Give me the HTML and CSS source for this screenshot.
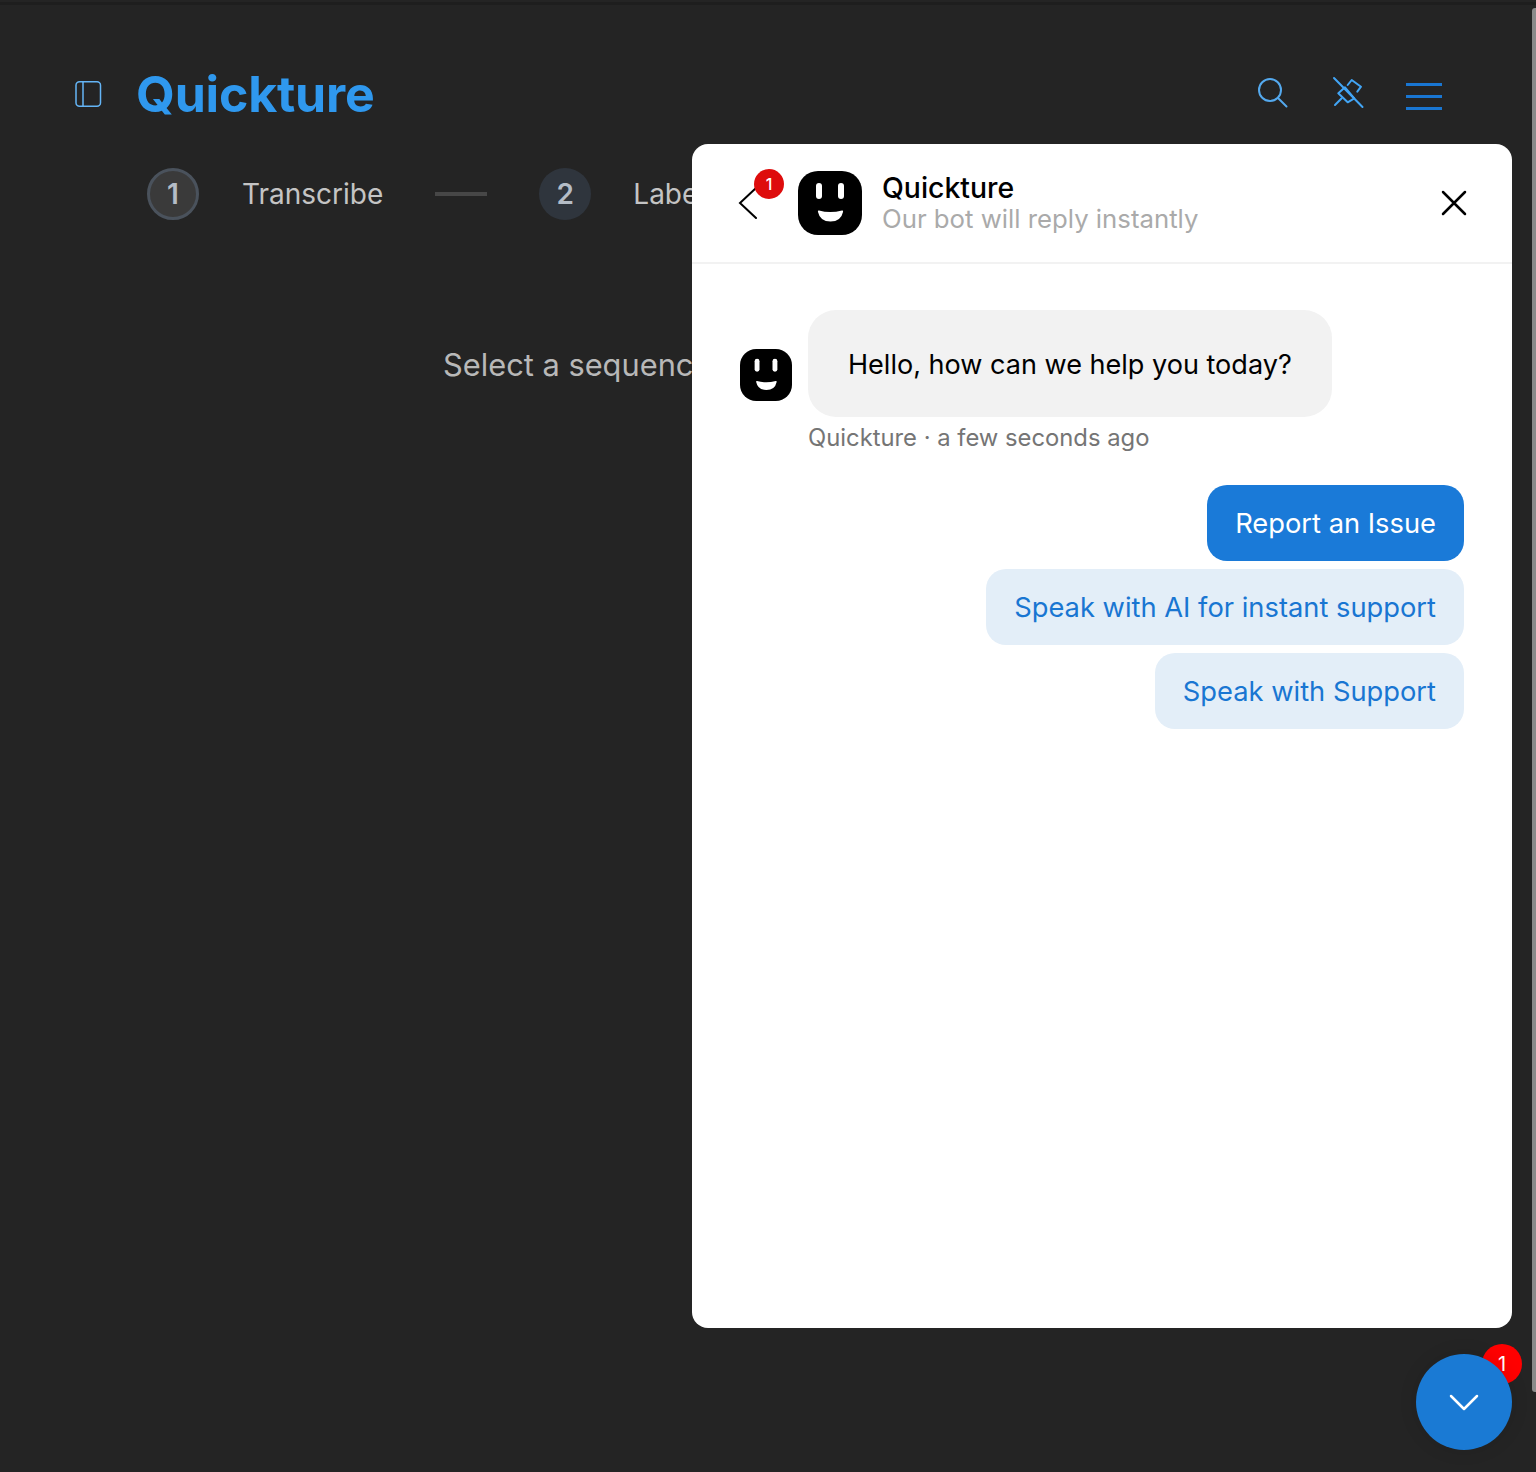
FILE: index.html
```html
<!DOCTYPE html>
<html lang="en">
<head>
  <meta charset="UTF-8" />
  <title>Quickture</title>
  <link rel="stylesheet" href="styles.css">
</head>
<body>
  <div class="topline"></div>
  <div class="app">
    <header class="topbar">
      <button class="iconBtn sidebarBtn" aria-label="Toggle sidebar">
        <svg width="28" height="28" viewBox="0 0 28 28" fill="none" stroke="#64b5f6" stroke-width="1.500"><rect x="1" y="1.800" width="24.500" height="24.400" rx="3.500"/><path d="M8 2v24"/></svg>
      </button>
      <div class="logo">Quickture</div>
      <div class="topActions">
        <svg class="searchIcon" width="30" height="30" viewBox="0 0 30 30" fill="none" stroke="#54a9ee" stroke-width="2" stroke-linecap="round"><circle cx="12" cy="12" r="11"/><path d="M20 20l8.500 8.500"/></svg>
        <svg class="pinIcon" width="32" height="33" viewBox="0 0 32 33" fill="none" stroke="#42a5f5" stroke-width="2" stroke-linecap="round" stroke-linejoin="round"><path d="M2 2l28.500 29"/><path d="M15.700 9l4-5 9.300 6.700-3.700 5"/><path d="M13 11.300l-6.700 6 9.400 9 6.600-4z"/><path d="M3 29l6.700-6.700"/></svg>
        <div class="burger"><span></span><span></span><span></span></div>
      </div>
    </header>

    <ol class="steps">
      <li class="step"><span class="stepNum active">1</span><span class="stepLabel">Transcribe</span></li>
      <li class="stepLine"></li>
      <li class="step"><span class="stepNum">2</span><span class="stepLabel">Label</span></li>
    </ol>

    <p class="hint">Select a sequence</p>
  </div>

  <section class="chat">
    <div class="chatHead">
      <button class="iconBtn backBtn" aria-label="Back">
        <svg width="20" height="32" viewBox="0 0 20 32" fill="none" stroke="#000" stroke-width="2" stroke-linecap="round"><path d="M18 1L2 16l16 15"/></svg>
        <span class="backBadge">1</span>
      </button>
      <svg class="face faceLg" viewBox="0 0 64 64"><use href="#face"/></svg>
      <div class="chatTitle">
        <div class="chatName">Quickture</div>
        <div class="chatSub">Our bot will reply instantly</div>
      </div>
      <button class="iconBtn closeBtn" aria-label="Close">
        <svg width="26" height="26" viewBox="0 0 26 26" stroke="#000" stroke-width="2.500" stroke-linecap="round"><path d="M2 2l22 22M24 2L2 24"/></svg>
      </button>
    </div>
    <div class="chatBody">
      <div class="msgRow">
        <svg class="face faceSm" viewBox="0 0 64 64"><use href="#face"/></svg>
        <div class="bubble">Hello, how can we help you today?</div>
      </div>
      <div class="msgMeta">Quickture · a few seconds ago</div>
      <div class="options">
        <button class="opt optOn">Report an Issue</button>
        <button class="opt">Speak with AI for instant support</button>
        <button class="opt">Speak with Support</button>
      </div>
    </div>
  </section>

  <div class="fab">
    <span class="fabBadge">1</span>
    <button class="fabBtn" aria-label="Close chat">
      <svg width="30" height="18" viewBox="0 0 30 18" fill="none" stroke="#fff" stroke-width="2.500" stroke-linecap="round" stroke-linejoin="round"><path d="M2 3l13 13L28 3"/></svg>
    </button>
  </div>

  <div class="scrollThumb"></div>

  <svg width="0" height="0" class="defs">
    <symbol id="face" viewBox="0 0 64 64">
      <path d="M20 0h24a20 20 0 0 1 20 20v24a20 20 0 0 1-20 20H20A20 20 0 0 1 0 44V20A20 20 0 0 1 20 0z" fill="#000"/>
      <rect x="18" y="12" width="6" height="16" rx="3" fill="#fff"/>
      <rect x="40" y="12" width="6" height="16" rx="3" fill="#fff"/>
      <path d="M21 39.500q11 3 23 0q1.500-.500 1 1.500q-2 9.500-12.500 9.500t-12.500-9.500q-.500-2 1-1.500z" fill="#fff"/>
    </symbol>
  </svg>
</body>
</html>
```

FILE: styles.css
```css
/* Reset & Base */
* { box-sizing: border-box; margin: 0; padding: 0; }
html, body { height: 100%; overflow: hidden; font-family: Inter, 'Noto Sans', sans-serif; background: #242424; color: #c4c4c4; }
button { border: none; background: none; font: inherit; cursor: pointer; }
.defs { display: block; }

.topline { height: 3px; margin-top: 2px; background: #1e1e1e; }

/* Page behind the chat */
.app { height: 100%; padding: 0 94px 0 75px; }
.topbar { display: flex; align-items: center; height: 64px; margin-top: 57px; }
.iconBtn { display: flex; align-items: center; justify-content: center; }
.sidebarBtn { width: 28px; height: 28px; }
.logo { margin-left: 33px; font-size: 50px; font-weight: 700; letter-spacing: -0.2px; color: #2f98ee; line-height: 64px; }
.topActions { margin-left: auto; display: flex; align-items: center; }
.searchIcon { margin-top: -3px; }
.pinIcon { margin-left: 44px; margin-top: -3px; }
.burger { margin-left: 42px; margin-top: 5px; width: 36px; display: flex; flex-direction: column; gap: 9px; }
.burger span { display: block; height: 3px; background: #1976d2; }

.steps { list-style: none; display: flex; align-items: center; margin-top: 42px; margin-left: 72px; }
.step { display: flex; align-items: center; gap: 44px; }
.step:last-child { gap: 43px; }
.stepNum { width: 52px; height: 52px; border-radius: 50%; background: #2f353d; color: #b4bcc6; font-size: 28px; font-weight: 600; display: flex; align-items: center; justify-content: center; }
.stepNum.active { background: #3a3a3a; border: 3px solid #4a525c; }
.stepLabel { font-size: 28px; font-weight: 400; color: #c4c4c4; margin-left: -1px; }
.stepLine { width: 52px; height: 4px; margin: 0 52px; background: #474747; }

.hint { margin-top: 126px; margin-left: 368px; font-size: 30.800px; color: #b8b8b8; white-space: nowrap; }

/* Chat panel */
.chat { position: absolute; left: 692px; top: 144px; width: 820px; height: 1184px; background: #fff; border-radius: 16px; color: #000; }
.chatHead { position: relative; display: flex; align-items: center; height: 120px; padding: 0 45px 0 46px; border-bottom: 2px solid #f2f2f2; }
.backBtn { position: relative; width: 20px; height: 32px; margin-right: 40px; }
.backBadge { position: absolute; left: 16px; top: -18px; width: 30px; height: 30px; border-radius: 50%; background: #de0c0c; color: #fff; font-size: 16px; font-weight: 500; display: flex; align-items: center; justify-content: center; }
.face { display: block; flex: none; }
.faceLg { width: 64px; height: 64px; }
.faceSm { width: 52px; height: 52px; margin-bottom: 16px; }
.chatTitle { margin-left: 20px; }
.chatName { font-size: 28.400px; font-weight: 500; line-height: 32px; }
.chatSub { font-size: 25.750px; line-height: 30px; color: #aaa; }
.closeBtn { margin-left: auto; width: 26px; height: 26px; }

.chatBody { padding: 46px 48px 0; }
.msgRow { display: flex; align-items: flex-end; gap: 16px; }
.bubble { padding: 1px 40px 0; height: 107px; display: flex; align-items: center; background: #f2f2f2; border-radius: 28px; font-size: 27.050px; }
.msgMeta { margin: 5px 0 0 68px; font-size: 23.800px; line-height: 32px; color: #757575; }
.options { margin-top: 31px; display: flex; flex-direction: column; align-items: flex-end; gap: 8px; }
.opt { height: 76px; padding: 0 28px; border-radius: 20px; background: #e3eef8; color: #1976d2; font-size: 27.300px; }
.optOn { background: #1a7ad8; color: #fff; }

/* Floating button */
.fab { position: absolute; left: 1416px; top: 1354px; width: 96px; height: 96px; }
.fabBtn { position: absolute; inset: 0; border-radius: 50%; background: #1a7ad4; display: flex; align-items: center; justify-content: center; box-shadow: 0 0 18px rgba(0,0,0,.12); }
.fabBadge { position: absolute; left: 66px; top: -10px; width: 40px; height: 40px; border-radius: 50%; background: #f00; color: #fff; font-size: 20px; display: flex; align-items: center; justify-content: center; }

.scrollThumb { position: absolute; right: 0; top: 8px; width: 4px; height: 1384px; border-radius: 3px 0 0 3px; background: #8a8a8a; }
```
